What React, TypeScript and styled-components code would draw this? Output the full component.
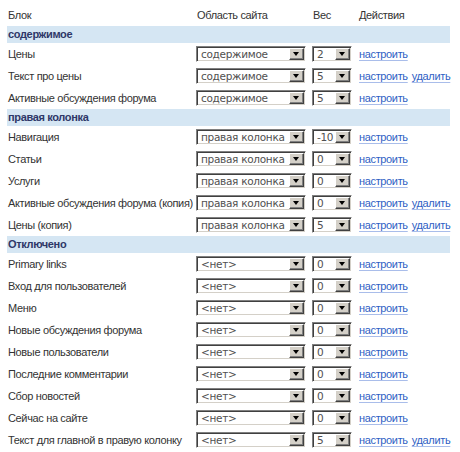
import React from 'react';
import styled, { createGlobalStyle } from 'styled-components';

const GlobalStyle = createGlobalStyle`
  body {
    margin: 0;
    background: #fff;
    font-family: "Liberation Sans", Arial, sans-serif;
    font-size: 11px;
    letter-spacing: -0.35px;
    color: #333;
  }
`;

type Row = {
  name: string;
  region: string;
  weight: string;
  removable?: boolean;
};

type Group = {
  title: string;
  rows: Row[];
};

const groups: Group[] = [
  {
    title: 'содержимое',
    rows: [
      { name: 'Цены', region: 'содержимое', weight: '2' },
      { name: 'Текст про цены', region: 'содержимое', weight: '5', removable: true },
      { name: 'Активные обсуждения форума', region: 'содержимое', weight: '5' },
    ],
  },
  {
    title: 'правая колонка',
    rows: [
      { name: 'Навигация', region: 'правая колонка', weight: '-10' },
      { name: 'Статьи', region: 'правая колонка', weight: '0' },
      { name: 'Услуги', region: 'правая колонка', weight: '0' },
      { name: 'Активные обсуждения форума (копия)', region: 'правая колонка', weight: '0', removable: true },
      { name: 'Цены (копия)', region: 'правая колонка', weight: '5', removable: true },
    ],
  },
  {
    title: 'Отключено',
    rows: [
      { name: 'Primary links', region: '<нет>', weight: '0' },
      { name: 'Вход для пользователей', region: '<нет>', weight: '0' },
      { name: 'Меню', region: '<нет>', weight: '0' },
      { name: 'Новые обсуждения форума', region: '<нет>', weight: '0' },
      { name: 'Новые пользователи', region: '<нет>', weight: '0' },
      { name: 'Последние комментарии', region: '<нет>', weight: '0' },
      { name: 'Сбор новостей', region: '<нет>', weight: '0' },
      { name: 'Сейчас на сайте', region: '<нет>', weight: '0' },
      { name: 'Текст для главной в правую колонку', region: '<нет>', weight: '5', removable: true },
    ],
  },
];

const Wrapper = styled.div`
  padding: 4px 8px 0 7px;
`;

const Table = styled.table`
  width: 443px;
  border-collapse: collapse;
  table-layout: fixed;
`;

const HeadCell = styled.th<{ $width?: number }>`
  width: ${(p) => (p.$width ? `${p.$width}px` : 'auto')};
  padding: 4px 1px 4px;
  line-height: 14px;
  text-align: left;
  font-weight: normal;
  color: #333;
  white-space: nowrap;
`;

const RegionRow = styled.tr`
  background: #d5e6f3;
`;

const RegionCell = styled.td`
  height: 17px;
  padding: 0 1px;
  line-height: 17px;
  font-weight: bold;
  color: #2e3868;
`;

const Cell = styled.td`
  height: 22px;
  padding: 0 1px;
  vertical-align: middle;
  white-space: nowrap;
  color: #333;
`;

const SelectCell = styled.td`
  height: 22px;
  padding: 0;
  vertical-align: middle;
`;

const FakeSelect = styled.div<{ $width: number }>`
  box-sizing: border-box;
  width: ${(p) => p.$width}px;
  height: 16px;
  display: flex;
  align-items: center;
  background: #fff;
  border: 1px solid;
  border-color: #808080 #fff #fff #808080;
  box-shadow: inset 1px 1px 0 #404040, inset -1px -1px 0 #d4d0c8;
  padding: 1px;
`;

const SelectText = styled.span`
  flex: 1;
  padding-left: 3px;
  line-height: 12px;
  font-family: "DejaVu Sans", Verdana, sans-serif;
  font-size: 10.5px;
  letter-spacing: -0.3px;
  color: #505050;
  overflow: hidden;
  white-space: nowrap;
`;

const ArrowButton = styled.span`
  box-sizing: border-box;
  width: 15px;
  height: 12px;
  flex-shrink: 0;
  display: flex;
  align-items: center;
  justify-content: center;
  background: #d4d0c8;
  border: 1px solid;
  border-color: #fff #404040 #404040 #fff;
  box-shadow: inset -1px -1px 0 #808080;

  &::after {
    content: '';
    width: 0;
    height: 0;
    border-left: 3.5px solid transparent;
    border-right: 3.5px solid transparent;
    border-top: 4px solid #000;
    margin-right: 1px;
  }
`;

const ActionCell = styled.td`
  height: 22px;
  padding: 0 0 0 1px;
  vertical-align: middle;
  white-space: nowrap;
`;

const ActionLink = styled.a`
  color: #2f5fc4;
  text-decoration: underline;
  text-decoration-color: #a9bdea;
  text-underline-offset: 2px;
  cursor: pointer;

  & + & {
    margin-left: 4px;
  }
`;

function Select({ value, width }: { value: string; width: number }) {
  return (
    <FakeSelect $width={width}>
      <SelectText>{value}</SelectText>
      <ArrowButton />
    </FakeSelect>
  );
}

export default function App() {
  return (
    <>
      <GlobalStyle />
      <Wrapper>
        <Table>
          <thead>
            <tr>
              <HeadCell $width={187}>Блок</HeadCell>
              <HeadCell $width={114}>Область сайта</HeadCell>
              <HeadCell $width={44}>Вес</HeadCell>
              <HeadCell>Действия</HeadCell>
            </tr>
          </thead>
          <tbody>
            {groups.map((group) => (
              <React.Fragment key={group.title}>
                <RegionRow>
                  <RegionCell colSpan={4}>{group.title}</RegionCell>
                </RegionRow>
                {group.rows.map((row) => (
                  <tr key={row.name}>
                    <Cell>{row.name}</Cell>
                    <SelectCell>
                      <Select value={row.region} width={110} />
                    </SelectCell>
                    <SelectCell>
                      <Select value={row.weight} width={40} />
                    </SelectCell>
                    <ActionCell>
                      <ActionLink>настроить</ActionLink>
                      {row.removable && <ActionLink>удалить</ActionLink>}
                    </ActionCell>
                  </tr>
                ))}
              </React.Fragment>
            ))}
          </tbody>
        </Table>
      </Wrapper>
    </>
  );
}
